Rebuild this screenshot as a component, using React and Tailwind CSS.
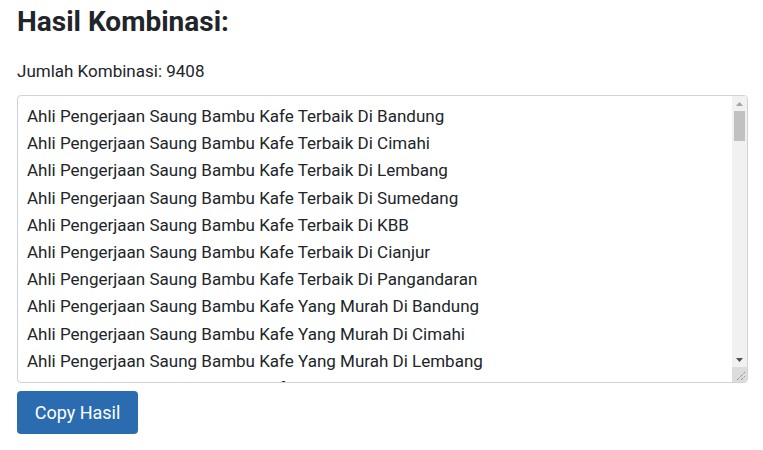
import { useState } from 'react';

const lokasi = ['Bandung', 'Cimahi', 'Lembang', 'Sumedang', 'KBB', 'Cianjur', 'Pangandaran'];
const sifat = ['Terbaik', 'Yang Murah', 'Berkualitas', 'Profesional', 'Terpercaya', 'Berpengalaman', 'Termurah', 'Terdekat', 'Kreatif', 'Unik', 'Modern', 'Minimalis'];

const lines = [];
sifat.forEach((s) => {
  lokasi.forEach((l) => {
    lines.push(`Ahli Pengerjaan Saung Bambu Kafe ${s} Di ${l}`);
  });
});

function FakeScrollbar() {
  return (
    <div className="absolute right-0 top-0 bottom-0 w-[15px] flex flex-col">
      <div className="flex-1 flex flex-col bg-[#f1f1f1]">
        <div className="h-[15px] flex items-center justify-center">
          <svg width="7" height="4" viewBox="0 0 7 4">
            <polygon points="3.5,0 7,4 0,4" fill="#a3a3a3" />
          </svg>
        </div>
        <div className="mx-[2px] h-[30px] bg-[#c1c1c1]" />
        <div className="flex-1" />
        <div className="h-[15px] flex items-center justify-center">
          <svg width="7" height="4" viewBox="0 0 7 4">
            <polygon points="0,0 7,0 3.5,4" fill="#505050" />
          </svg>
        </div>
      </div>
      <div className="h-[15px] bg-[#dcdcdc] flex items-end justify-end">
        <svg width="15" height="15" viewBox="0 0 15 15">
          <line x1="5" y1="13" x2="13" y2="5" stroke="#6b6b6b" strokeWidth="1" strokeDasharray="1 1" />
          <line x1="9" y1="13" x2="13" y2="9" stroke="#6b6b6b" strokeWidth="1" strokeDasharray="1 1" />
        </svg>
      </div>
    </div>
  );
}

export default function App() {
  const [copied, setCopied] = useState(false);

  return (
    <div className="px-[17px] pt-[5px] font-['Roboto',sans-serif] text-[#212529] bg-white">
      <h2 className="text-[28px] font-bold leading-[34px]">Hasil Kombinasi:</h2>

      <p className="mt-[19px] text-[17px] leading-[26px]">Jumlah Kombinasi: 9408</p>

      <div className="relative mt-[11px] w-[731px] h-[288px] border border-[#ced4da] rounded-[4px] overflow-hidden">
        <textarea
          readOnly
          value={lines.join('\n')}
          className="block w-full h-full resize-none overflow-hidden pl-[9px] pr-[24px] pt-[7px] text-[17px] leading-[1.6] text-[#212529] font-['Roboto',sans-serif] outline-none whitespace-pre"
        />
        <FakeScrollbar />
      </div>

      <button
        onClick={() => setCopied(true)}
        className="mt-[8px] h-[43px] w-[121px] rounded-[4px] bg-[#2b6cb0] text-white text-[18px]"
      >
        {copied ? 'Copy Hasil' : 'Copy Hasil'}
      </button>
    </div>
  );
}
